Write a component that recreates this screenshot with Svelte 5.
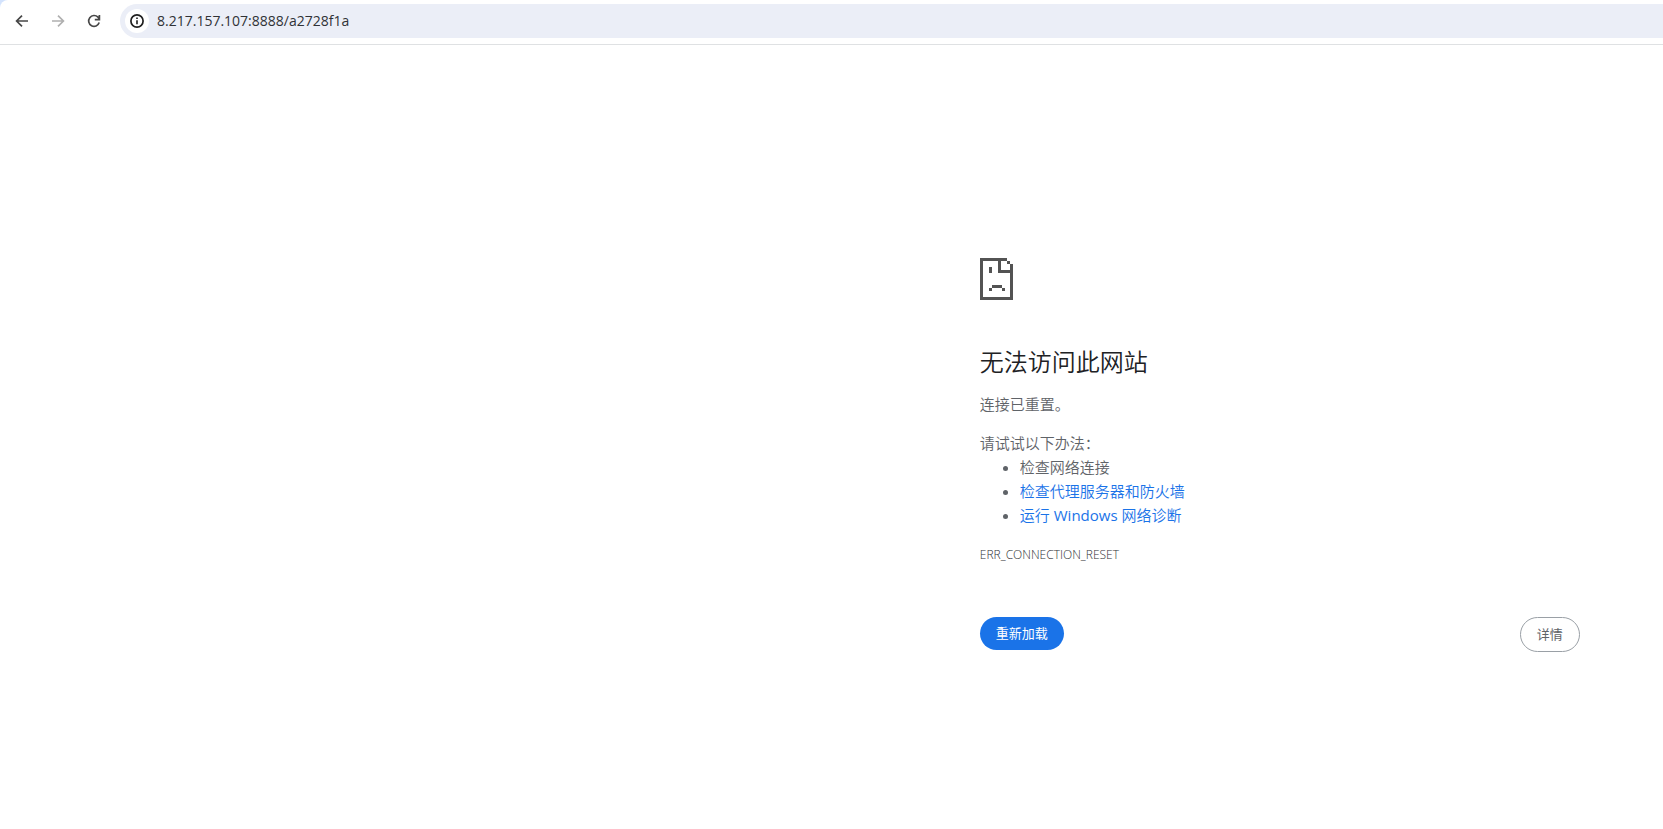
<script>
    let address = $state('8.217.157.107:8888/a2728f1a');
</script>

<div class="window-top">
    <div class="toolbar">
        <button class="nav-btn" aria-label="后退">
            <svg width="16" height="16" viewBox="0 0 16 16" fill="none" stroke="currentColor" stroke-width="1.7">
                <path d="M14 8H3M8 2.6 2.6 8 8 13.4" />
            </svg>
        </button>
        <button class="nav-btn" aria-label="前进" disabled>
            <svg width="16" height="16" viewBox="0 0 16 16" fill="none" stroke="currentColor" stroke-width="1.7">
                <path d="M2 8h11M8 2.6 13.4 8 8 13.4" />
            </svg>
        </button>
        <button class="nav-btn" aria-label="重新加载此页">
            <svg width="16" height="16" viewBox="0 0 16 16" fill="none" stroke="currentColor" stroke-width="1.7">
                <path d="M13.2 9.6A5.4 5.4 0 1 1 12 4.2L13.4 6M13.4 2v4.6H8.8" />
            </svg>
        </button>

        <div class="omnibox">
            <button class="info-btn" aria-label="查看网站信息">
                <svg width="16" height="16" viewBox="0 0 16 16" fill="none" stroke="currentColor">
                    <circle cx="8" cy="8" r="6.1" stroke-width="1.7" />
                    <path d="M8 7.2v4M8 4.4v1.6" stroke-width="1.6" />
                </svg>
            </button>
            <input class="url" type="text" aria-label="地址和搜索栏" spellcheck="false" bind:value={address} />
        </div>
    </div>
</div>

<main class="error-page">
    <div class="interstitial">
        <svg class="sad-icon" width="33" height="42" viewBox="0 0 33 42" fill="currentColor" shape-rendering="crispEdges" aria-hidden="true">
            <path d="M0 0h27v3h-6v9h12v30H0zM3 3v36h27V15H18V3z" fill-rule="evenodd" />
            <path d="M27 3h3v3h-3zM30 6h3v6h-3z" />
            <path d="M9 9h3v6H9zM12 27h10v3H12zM9 30h3v3H9zM22 30h3v3h-3z" />
        </svg>

        <h1>无法访问此网站</h1>
        <p>连接已重置。</p>

        <div class="suggestions">
            <p>请试试以下办法：</p>
            <ul>
                <li>检查网络连接</li>
                <li><a href="#proxy">检查代理服务器和防火墙</a></li>
                <li><a href="#diagnose">运行 <span class="latin">Windows</span> 网络诊断</a></li>
            </ul>
        </div>

        <div class="error-code">ERR_CONNECTION_RESET</div>

        <div class="buttons">
            <button class="reload-btn">重新加载</button>
            <button class="details-btn">详情</button>
        </div>
    </div>
</main>

<style>
    :global(body) {
        background: #fff;
        font-family: "Open Sans", "Noto Sans CJK SC", sans-serif;
    }

    button {
        font-family: inherit;
        border: none;
        padding: 0;
        cursor: pointer;
    }

    .window-top {
        background: #d3e3fd;
    }

    .toolbar {
        display: flex;
        align-items: center;
        gap: 8px;
        padding: 4px 0 6px 8px;
        border-bottom: 1px solid #dfe1e3;
        border-top-left-radius: 8px;
        background: #fff;
    }

    .nav-btn {
        display: flex;
        align-items: center;
        justify-content: center;
        width: 28px;
        height: 28px;
        border-radius: 50%;
        background: transparent;
        color: #474747;
    }

    .nav-btn:disabled {
        color: #b0b0b0;
        cursor: default;
    }

    .omnibox {
        flex: 1;
        display: flex;
        align-items: center;
        gap: 8px;
        height: 34px;
        margin-left: 4px;
        padding-left: 5px;
        border-radius: 17px 0 0 17px;
        background: #ebeef7;
    }

    .info-btn {
        display: flex;
        align-items: center;
        justify-content: center;
        width: 24px;
        height: 24px;
        border-radius: 50%;
        background: #fff;
        color: #1f1f1f;
    }

    .url {
        flex: 1;
        min-width: 0;
        padding: 0 0 2px;
        border: none;
        outline: none;
        background: transparent;
        font-family: inherit;
        font-size: 14px;
        color: #303236;
    }

    .error-page {
        display: flex;
        justify-content: flex-end;
        padding: 213px 5% 0;
    }

    .interstitial {
        width: 100%;
        max-width: 600px;
        font-size: 15px;
        font-weight: 350;
        line-height: 24px;
        color: #5f6368;
    }

    .sad-icon {
        display: block;
        margin-bottom: 47px;
        color: #535353;
    }

    h1 {
        margin: 0 0 15px;
        font-size: 24px;
        font-weight: 350;
        line-height: 30px;
        color: #202124;
    }

    p {
        margin: 0;
    }

    .suggestions {
        margin: 15px 0 16px;
    }

    ul {
        margin: 0;
        padding-left: 40px;
    }

    a {
        color: #1a73e8;
        text-decoration: none;
    }

    .latin {
        font-weight: 400;
    }

    .error-code {
        font-size: 12px;
        color: #303236;
    }

    .buttons {
        display: flex;
        justify-content: space-between;
        align-items: flex-start;
        margin-top: 50px;
    }

    .reload-btn,
    .details-btn {
        padding: 8px 16px;
        border-radius: 20px;
        font-size: 13px;
        line-height: 17px;
    }

    .reload-btn {
        background: #1a73e8;
        color: #fff;
    }

    .details-btn {
        border: 1px solid #9aa0a6;
        background: #fff;
        color: #5f6368;
    }
</style>
